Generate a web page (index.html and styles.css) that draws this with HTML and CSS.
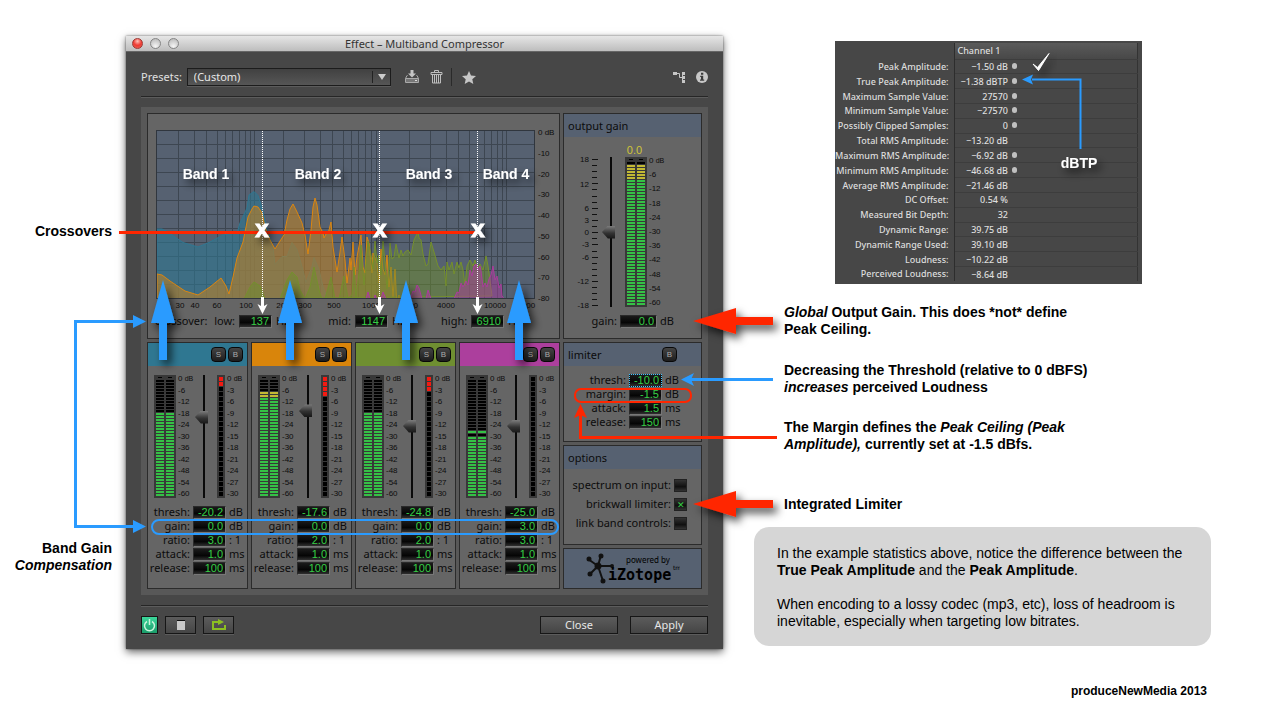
FILE: index.html
```html
<!DOCTYPE html>
<html lang="en">
<head>
<meta charset="utf-8">
<title>Effect – Multiband Compressor</title>
<link rel="stylesheet" href="styles.css">
</head>
<body>
<main class="slide">
  <aside class="callouts">
    <p class="callout crossovers">Crossovers</p>
    <p class="callout band-gain">Band Gain<br><em>Compensation</em></p>
  </aside>

  <section class="window">
    <header class="titlebar">
      <span class="light red"></span><span class="light"></span><span class="light"></span>
      <h1>Effect – Multiband Compressor</h1>
    </header>
    <div class="toolbar">
      <label for="preset">Presets:</label>
      <span class="select"><select id="preset"><option>(Custom)</option></select></span>
      <button class="icon save" aria-label="Save preset"><svg width="16" height="14" viewBox="0 0 16 14"><path d="M6.500 0h3v3.500h2.500L8 7.500 4 3.500h2.500z" fill="#c4c4c4"/><path d="M3.500 5.500H3L1.500 8.500v4h13v-4L13 5.500h-.500M1.500 8.500h13" fill="none" stroke="#aaa"/><path d="M2 9h12v3H2z" fill="#777"/><path d="M11 10.500h2" stroke="#ddd"/></svg></button>
      <button class="icon" aria-label="Delete preset"><svg width="13" height="14" viewBox="0 0 13 14" fill="none" stroke="#bdbdbd"><path d="M1 4.500V2.500h11v2M4.500 2V.500h4V2M2.500 5v8h8V5M4.500 5v8M6.500 5v8M8.500 5v8M1 4.500h11"/></svg></button>
      <i class="divider"></i>
      <button class="icon" aria-label="Favorite"><svg width="14" height="13" viewBox="0 0 14 13"><path d="M7 0l2 4.400 5 .500-3.700 3.300L11.300 13 7 10.500 2.700 13l1-4.800L0 4.900l5-.500z" fill="#c6c6c6"/></svg></button>
      <span class="spring"></span>
      <button class="icon" aria-label="Routing"><svg width="13" height="13" viewBox="0 0 13 13"><path d="M0 1h4v3H0zM9 1h3v3H9zM9 5h3v3H9zM9 9h3v3H9z" fill="#c6c6c6"/><path d="M4 2.500h2.500v4H9M9.500 9v-5" fill="none" stroke="#c6c6c6"/></svg></button>
      <button class="icon" aria-label="Information"><svg width="12" height="12" viewBox="0 0 12 12"><circle cx="6" cy="6" r="6" fill="#c8c8c8"/><path d="M5 1.800h2.300v1.900H5zM4.200 4.800h3v3.800h1v1.200H4V8.600h1V6h-.800z" fill="#3c3c3c"/></svg></button>
    </div>

    <div class="rack">
      <section class="panel graph">
        <div class="plot">
          <svg class="spectrum" viewBox="157 131 377 167" preserveAspectRatio="none">
            <path class="gridlines" d="M157 144.500h377M157 158.500h377M157 172.500h377M157 186.500h377M157 200.500h377M157 214.500h377M157 228.500h377M157 242.500h377M157 256.500h377M157 270.500h377M157 284.500h377M178.500 131v167M194.500 131v167M206.500 131v167M217.500 131v167M225.500 131v167M232.500 131v167M239.500 131v167M245.500 131v167M250.500 131v167M254.500 131v167M283.500 131v167M304.500 131v167M320.500 131v167M332.500 131v167M343.500 131v167M351.500 131v167M358.500 131v167M365.500 131v167M371.500 131v167M376.500 131v167M409.500 131v167M430.500 131v167M446.500 131v167M458.500 131v167M469.500 131v167M484.500 131v167M491.500 131v167M497.500 131v167M502.500 131v167M506.500 131v167"/>
            <path class="wave teal" d="M157 299V229l5 0 5 2.500 16 11 15 4.500 12-5 13-7 14-2 3-10 7-15 2-13 5-3.500 4 4 4 12 5 22 6 18 2 17 7-8 5 0 5-14 5 7 5 17 4 16 6-16 2-9 5 12 4 17 4 11z"/>
            <path class="wave orange" d="M157 299V274l5 1 8 6 15 10 13 4 12-8 11-9 5 8 3 8 4-17 4-19 6-16 5-25 4-8 2-3 4 1 4 6 3 14 5 13 5 9 5-8 4-6 3-15 3-11 3-5 4 8 5 11 3 12 3 19 3-24 2-23 2-9 2 7 3 22 3 6 1 5 3-6 1 2 3-12 2 25 4 25 3-20 2-15 3 23 2 23 3-25 1 12 2-28 2 33 2-18 4-22 2 32 2 6 2-36 2 6 3 30 1-20 4 10 2 20 2-34 2 20 2 6 2-20 2 32 2-20 2 30 2-28 2 38 2-12 2 22 2-24 2 26 2-16 2 24 2-14 2 22 2-12 2 14z"/>
            <path class="wave green" d="M244 299l6-12 4-5 6 4 5 13h15l7-19 5-8 5 5 3 13 5 9 5-12 4-20 5 23 3 9h3l6-22 4 22h4l5-23 4 22 4-3 2-28 2 30 3-24 2-28 3 40 2-22 2-22 3 14 2 14 2-28 2 22 2-8 2 20 2-34 2 22 2 26 2-24 1-22 2 16 2-2 2-13 3 14 2-8 2 6 2-4 3-2 3 5 3-15 4-8 1 6 2 2 2 14 3 12 2-2 3-22 3 10 4 14 3 4 3-4 2 20 1-24 2 8 3-8 2 12 3-12 2 6 2-6 2 8 2 16 2-20 3-6 3 6 2-6 2 8 3-4 3 6 3-14 2 10 2 14 2 16z"/>
            <path class="wave magenta" d="M366 299l2-7 2 7h4l1-4 2 4h4l2-7 3 7h24l3-8 2 1 2-7 2 3 3 11h4l2-9 3 9h23l3-7 2 1 2-10 2 4 3-6 2 4 2-15 2 6 2-10 2-2 2 6 2-4 1 5 2 16 2-4 2 4 2-8 2-4 2-9 2 14 2-4 2 12 2-4 1 12 3 4 2 8z"/>
          </svg>
          <ul class="scale plot-db"><li>0 dB</li><li>-10</li><li>-20</li><li>-30</li><li>-40</li><li>-50</li><li>-60</li><li>-70</li><li>-80</li></ul>
        </div>
        <svg class="freq" viewBox="148 299 411 12">
          <text x="180" y="307">30</text><text x="195" y="307">40</text><text x="217" y="307">60</text><text x="246" y="307">100</text><text x="283" y="307">200</text><text x="305" y="307">300</text><text x="334" y="307">500</text><text x="371" y="307">1000</text><text x="409" y="307">2000</text><text x="446" y="307">4000</text><text x="495" y="307">10000</text><text x="524" y="307">20000</text>
        </svg>
        <div class="xover">
          <span class="xover-title">crossover:</span>
          <span class="field"><label for="x1">low:</label><input id="x1" value="137"><span>Hz</span></span>
          <span class="field"><label for="x2">mid:</label><input id="x2" value="1147"><span>Hz</span></span>
          <span class="field"><label for="x3">high:</label><input id="x3" value="6910"><span>Hz</span></span>
        </div>
      </section>

      <section class="panel output">
        <h2 class="head">output gain</h2>
        <output class="peak">0.0</output>
        <div class="out-meters">
          <svg class="ticks" viewBox="0 0 34 156"><path d="M28 5.500h6M28 11.500h5M28 17.500h5M28 23.500h5M28 29.500h6M28 35.500h5M28 42.500h5M28 48.500h5M28 54.500h6M28 60.500h5M28 66.500h6M28 72.500h5M28 78.500h6M28 84.500h5M28 90.500h6M28 97.500h5M28 103.500h6M28 109.500h5M28 115.500h5M28 121.500h5M28 127.500h6M28 133.500h5M28 139.500h5M28 145.500h5M28 151.500h6"/><text x="25" y="8">18</text><text x="25" y="33">12</text><text x="25" y="57">6</text><text x="25" y="69">3</text><text x="25" y="81">0</text><text x="25" y="93">-3</text><text x="25" y="106">-6</text><text x="25" y="130">-12</text><text x="25" y="154">-18</text></svg>
          <input class="fader" type="range" min="0" max="1000" value="500" aria-label="Output gain">
          <div class="meter"><i style="--off:1;--hot:5"></i><i style="--off:1;--hot:5"></i></div>
          <ul class="scale"><li>0 <small>dB</small></li><li>-6</li><li>-12</li><li>-18</li><li>-24</li><li>-30</li><li>-36</li><li>-42</li><li>-48</li><li>-54</li><li>-60</li></ul>
        </div>
        <div class="field gain"><label for="og">gain:</label><input id="og" value="0.0"><span>dB</span></div>
      </section>

      <div class="bands">
        <section class="panel band">
          <div class="head teal"><button class="key">S</button><button class="key">B</button></div>
          <div class="meters">
            <div class="meter"><i style="--off:11;--hot:0"></i><i style="--off:11;--hot:0"></i></div>
            <ul class="scale"><li>0 <small>dB</small></li><li>-6</li><li>-12</li><li>-18</li><li>-24</li><li>-30</li><li>-36</li><li>-42</li><li>-48</li><li>-54</li><li>-60</li></ul>
            <input class="fader" type="range" min="0" max="1000" value="677" aria-label="Band 1 threshold">
            <div class="reduction"><i style="--cut:2"></i></div>
            <ul class="scale"><li>0 <small>dB</small></li><li>-3</li><li>-6</li><li>-9</li><li>-12</li><li>-15</li><li>-18</li><li>-21</li><li>-24</li><li>-27</li><li>-30</li></ul>
          </div>
          <div class="params">
            <div class="field"><label for="b1t">thresh:</label><input id="b1t" value="-20.2"><span>dB</span></div>
            <div class="field"><label for="b1g">gain:</label><input id="b1g" value="0.0"><span>dB</span></div>
            <div class="field"><label for="b1r">ratio:</label><input id="b1r" value="3.0"><span>: 1</span></div>
            <div class="field"><label for="b1a">attack:</label><input id="b1a" value="1.0"><span>ms</span></div>
            <div class="field"><label for="b1e">release:</label><input id="b1e" value="100"><span>ms</span></div>
          </div>
        </section>
        <section class="panel band">
          <div class="head orange"><button class="key">S</button><button class="key">B</button></div>
          <div class="meters">
            <div class="meter"><i style="--off:4;--hot:2"></i><i style="--off:4;--hot:2"></i></div>
            <ul class="scale"><li>0 <small>dB</small></li><li>-6</li><li>-12</li><li>-18</li><li>-24</li><li>-30</li><li>-36</li><li>-42</li><li>-48</li><li>-54</li><li>-60</li></ul>
            <input class="fader" type="range" min="0" max="1000" value="732" aria-label="Band 2 threshold">
            <div class="reduction"><i style="--cut:4"></i></div>
            <ul class="scale"><li>0 <small>dB</small></li><li>-3</li><li>-6</li><li>-9</li><li>-12</li><li>-15</li><li>-18</li><li>-21</li><li>-24</li><li>-27</li><li>-30</li></ul>
          </div>
          <div class="params">
            <div class="field"><label for="b2t">thresh:</label><input id="b2t" value="-17.6"><span>dB</span></div>
            <div class="field"><label for="b2g">gain:</label><input id="b2g" value="0.0"><span>dB</span></div>
            <div class="field"><label for="b2r">ratio:</label><input id="b2r" value="2.0"><span>: 1</span></div>
            <div class="field"><label for="b2a">attack:</label><input id="b2a" value="1.0"><span>ms</span></div>
            <div class="field"><label for="b2e">release:</label><input id="b2e" value="100"><span>ms</span></div>
          </div>
        </section>
        <section class="panel band">
          <div class="head green"><button class="key">S</button><button class="key">B</button></div>
          <div class="meters">
            <div class="meter"><i style="--off:11;--hot:0"></i><i style="--off:11;--hot:0"></i></div>
            <ul class="scale"><li>0 <small>dB</small></li><li>-6</li><li>-12</li><li>-18</li><li>-24</li><li>-30</li><li>-36</li><li>-42</li><li>-48</li><li>-54</li><li>-60</li></ul>
            <input class="fader" type="range" min="0" max="1000" value="595" aria-label="Band 3 threshold">
            <div class="reduction"><i style="--cut:3"></i></div>
            <ul class="scale"><li>0 <small>dB</small></li><li>-3</li><li>-6</li><li>-9</li><li>-12</li><li>-15</li><li>-18</li><li>-21</li><li>-24</li><li>-27</li><li>-30</li></ul>
          </div>
          <div class="params">
            <div class="field"><label for="b3t">thresh:</label><input id="b3t" value="-24.8"><span>dB</span></div>
            <div class="field"><label for="b3g">gain:</label><input id="b3g" value="0.0"><span>dB</span></div>
            <div class="field"><label for="b3r">ratio:</label><input id="b3r" value="2.0"><span>: 1</span></div>
            <div class="field"><label for="b3a">attack:</label><input id="b3a" value="1.0"><span>ms</span></div>
            <div class="field"><label for="b3e">release:</label><input id="b3e" value="100"><span>ms</span></div>
          </div>
        </section>
        <section class="panel band">
          <div class="head magenta"><button class="key">S</button><button class="key">B</button></div>
          <div class="meters">
            <div class="meter held"><i style="--off:17;--hot:0"></i><i style="--off:17;--hot:0"></i></div>
            <ul class="scale"><li>0 <small>dB</small></li><li>-6</li><li>-12</li><li>-18</li><li>-24</li><li>-30</li><li>-36</li><li>-42</li><li>-48</li><li>-54</li><li>-60</li></ul>
            <input class="fader" type="range" min="0" max="1000" value="595" aria-label="Band 4 threshold">
            <div class="reduction"><i style="--cut:0"></i></div>
            <ul class="scale"><li>0 <small>dB</small></li><li>-3</li><li>-6</li><li>-9</li><li>-12</li><li>-15</li><li>-18</li><li>-21</li><li>-24</li><li>-27</li><li>-30</li></ul>
          </div>
          <div class="params">
            <div class="field"><label for="b4t">thresh:</label><input id="b4t" value="-25.0"><span>dB</span></div>
            <div class="field"><label for="b4g">gain:</label><input id="b4g" value="3.0"><span>dB</span></div>
            <div class="field"><label for="b4r">ratio:</label><input id="b4r" value="3.0"><span>: 1</span></div>
            <div class="field"><label for="b4a">attack:</label><input id="b4a" value="1.0"><span>ms</span></div>
            <div class="field"><label for="b4e">release:</label><input id="b4e" value="100"><span>ms</span></div>
          </div>
        </section>
      </div>

      <div class="side">
        <section class="panel limiter">
          <h2 class="head">limiter <button class="key">B</button></h2>
          <div class="params">
            <div class="field"><label for="lt">thresh:</label><input id="lt" class="active" value="-10.0"><span>dB</span></div>
            <div class="field"><label for="lm">margin:</label><input id="lm" value="-1.5"><span>dB</span></div>
            <div class="field"><label for="la">attack:</label><input id="la" value="1.5"><span>ms</span></div>
            <div class="field"><label for="lr">release:</label><input id="lr" value="150"><span>ms</span></div>
          </div>
        </section>
        <section class="panel options">
          <h2 class="head">options</h2>
          <div class="checks">
            <label>spectrum on input: <input type="checkbox"></label>
            <label>brickwall limiter: <input type="checkbox" checked></label>
            <label>link band controls: <input type="checkbox"></label>
          </div>
        </section>
        <section class="panel brand">
          <svg width="94" height="32" viewBox="0 0 94 32">
            <g stroke="#111" stroke-width="2" fill="#111"><path d="M12 13L2 6M12 13l3-11M12 13l14 0M12 13L4 21M12 13l5 15"/><circle cx="12" cy="13" r="2.500"/><circle cx="3" cy="6" r="1.500"/><circle cx="15" cy="3" r="1.500"/><circle cx="26" cy="13" r="1"/><circle cx="4" cy="21" r="1.500"/><circle cx="17" cy="28" r="1.500"/></g>
            <text class="powered" x="40" y="10">powered by</text>
            <text class="izotope" x="22" y="27">iZotope</text>
            <text class="tm" x="87" y="17">tm</text>
          </svg>
        </section>
      </div>
    </div>

    <footer class="actions">
      <button class="power" aria-label="Power"><svg width="13" height="13" viewBox="0 0 13 13" fill="none" stroke="#c8f5dc" stroke-width="1.500"><path d="M4 2.500a5 5 0 1 0 5 0M6.500 0v6"/></svg></button>
      <button class="small" aria-label="Stop"><svg width="8" height="10" viewBox="0 0 8 10"><path d="M0 1h8v9H0z" fill="#c9c9c9"/><path d="M0 0h8v1H0z" fill="#111"/></svg></button>
      <button class="small loop" aria-label="Loop"><svg width="16" height="12" viewBox="0 0 16 12"><path d="M7 3H2v7h12V6" fill="none" stroke="#8cc021" stroke-width="2"/><path d="M7 0l6 3-6 3z" fill="#8cc021"/></svg></button>
      <span class="spring"></span>
      <button class="wide">Close</button>
      <button class="wide">Apply</button>
    </footer>
  </section>

  <div class="notes">
    <section class="stats">
      <table>
        <thead><tr><th></th><th class="channel">Channel 1</th><th class="rest"></th></tr></thead>
        <tbody>
          <tr><th>Peak Amplitude:</th><td>−1.50 dB</td><td class="mark"><i></i></td></tr>
          <tr><th>True Peak Amplitude:</th><td>−1.38 dBTP</td><td class="mark"><i></i></td></tr>
          <tr><th>Maximum Sample Value:</th><td>27570</td><td class="mark"><i></i></td></tr>
          <tr><th>Minimum Sample Value:</th><td>−27570</td><td class="mark"><i></i></td></tr>
          <tr><th>Possibly Clipped Samples:</th><td>0</td><td class="mark"><i></i></td></tr>
          <tr><th>Total RMS Amplitude:</th><td>−13.20 dB</td><td class="mark"></td></tr>
          <tr><th>Maximum RMS Amplitude:</th><td>−6.92 dB</td><td class="mark"><i></i></td></tr>
          <tr><th>Minimum RMS Amplitude:</th><td>−46.68 dB</td><td class="mark"><i></i></td></tr>
          <tr><th>Average RMS Amplitude:</th><td>−21.46 dB</td><td class="mark"></td></tr>
          <tr><th>DC Offset:</th><td>0.54 %</td><td class="mark"></td></tr>
          <tr><th>Measured Bit Depth:</th><td>32</td><td class="mark"></td></tr>
          <tr><th>Dynamic Range:</th><td>39.75 dB</td><td class="mark"></td></tr>
          <tr><th>Dynamic Range Used:</th><td>39.10 dB</td><td class="mark"></td></tr>
          <tr><th>Loudness:</th><td>−10.22 dB</td><td class="mark"></td></tr>
          <tr><th>Perceived Loudness:</th><td>−8.64 dB</td><td class="mark"></td></tr>
        </tbody>
      </table>
    </section>
    <p class="note global"><em>Global</em> Output Gain. This does *not* define<br>Peak Ceiling.</p>
    <p class="note threshold">Decreasing the Threshold (relative to 0 dBFS)<br><em>increases</em> perceived Loudness</p>
    <p class="note margin">The Margin defines the <em>Peak Ceiling (Peak<br>Amplitude),</em> currently set at -1.5 dBfs.</p>
    <p class="note integrated">Integrated Limiter</p>
    <section class="example">
      <p>In the example statistics above, notice the difference between the <b>True Peak Amplitude</b> and the <b>Peak Amplitude</b>.</p>
      <p>When encoding to a lossy codec (mp3, etc), loss of headroom is inevitable, especially when targeting low bitrates.</p>
    </section>
    <p class="credit">produceNewMedia 2013</p>
  </div>

  <svg class="overlay" width="1280" height="720" viewBox="0 0 1280 720">
    <defs>
      <filter id="shade" x="-50%" y="-50%" width="200%" height="200%"><feDropShadow dx="4" dy="5" stdDeviation="4" flood-color="#000" flood-opacity=".7"/></filter>
      <path id="up" d="M0 0L12 43H4V80H-4V43H-12z"/>
      <path id="left" d="M0 0L43 -13V-4H80V4H43V13z"/>
      <path id="down" d="M0 17L-5 7L-1.500 9V0H1.500V9L5 7z"/>
    </defs>
    <g class="dotted"><path d="M262.500 131v167M379.500 131v167M477.500 131v167"/></g>
    <g fill="#fff"><use href="#down" x="262.500" y="297"/><use href="#down" x="379.500" y="297"/><use href="#down" x="477.500" y="297"/></g>
    <path d="M119 232.500H477" stroke="#ff2600" stroke-width="3"/>
    <g class="label" filter="url(#shade)"><text x="206" y="179">Band 1</text><text x="318" y="179">Band 2</text><text x="429" y="179">Band 3</text><text x="506" y="179">Band 4</text><text x="1079" y="168">dBTP</text></g>
    <g class="cross" filter="url(#shade)"><text x="262" y="237">x</text><text x="380" y="237">x</text><text x="478" y="237">x</text></g>
    <path d="M1033 64l4.500 3.500L1049 53.500 1038.500 70.500z" fill="#fff" stroke="#fff" filter="url(#shade)"/>
    <g fill="#2a9bff" filter="url(#shade)"><use href="#up" x="163" y="280"/><use href="#up" x="290" y="280"/><use href="#up" x="406" y="280"/><use href="#up" x="519" y="280"/></g>
    <g fill="#ff2600" filter="url(#shade)"><use href="#left" x="693" y="321"/><use href="#left" x="693" y="504"/></g>
    <g fill="none" stroke="#2a9bff" stroke-width="3">
      <path d="M134 321.500H75.500V526.500H134M690 379.500h83"/>
      <path d="M1080.500 149V79.500H1032" stroke-width="2"/>
      <rect x="152" y="520" width="406" height="14" rx="7" stroke-width="2"/>
    </g>
    <g fill="#2a9bff"><path d="M146 321.500l-13-6.500v13zM146 526.500l-13-6.500v13zM681 379.500l13-6.500-3 6.500 3 6.500zM1022 79.500l11-5-2 5 2 5z"/></g>
    <g fill="none" stroke="#ff2600"><path d="M777 437.500H580.500V415" stroke-width="3"/><rect x="575" y="389" width="116" height="13" rx="6" stroke-width="2"/></g>
    <path d="M580.500 404l6.500 14-6.500-3-6.500 3z" fill="#ff2600"/>
  </svg>
</main>
</body>
</html>
```
FILE: styles.css
```css
* { box-sizing: border-box; }
body { margin: 0; background: #fff; color: #000; font-family: "Liberation Sans", Arial, sans-serif; font-size: 14px; line-height: 17px; }
p, h1, h2, ul { margin: 0; padding: 0; }
ul { list-style: none; }
button, input, select { font: inherit; margin: 0; padding: 0; }
.slide { position: relative; display: grid; grid-template-columns: 126px 597px minmax(0, 1fr); align-items: start; min-height: 720px; }
.overlay { position: absolute; left: 0; top: 0; pointer-events: none; overflow: visible; }
.dotted { stroke: #fff; stroke-width: 1; stroke-dasharray: 1 1; }
.label { fill: #fff; font-weight: bold; text-anchor: middle; }
.cross { fill: #fff; font-size: 24px; font-weight: bold; text-anchor: middle; stroke: #fff; }

.callouts { padding: 223px 14px 0 0; text-align: right; font-weight: bold; }
.band-gain { margin-top: 300px; }

/* Window chrome */
.window { margin-top: 36px; background: #474747; box-shadow: 0 3px 8px rgba(0,0,0,.6), 0 0 2px rgba(0,0,0,.5); font-family: "Noto Sans", sans-serif; font-size: 11px; line-height: 14px; padding-bottom: 15px; }
.titlebar { position: relative; display: flex; align-items: center; gap: 7px; height: 16px; padding-left: 6px; background: linear-gradient(#e6e6e6, #bdbdbd); border-bottom: 1px solid #666; }
.titlebar h1 { flex: 1; padding-right: 60px; text-align: center; font-size: 11px; font-weight: 400; color: #333; }
.light { width: 11px; height: 11px; border: 1px solid #858585; border-radius: 50%; background: radial-gradient(circle at 50% 80%, #f5f5f5, #b4b4b4); }
.light.red { border-color: #9c3a35; background: radial-gradient(circle at 50% 25%, #ffc4bb, #ef3a32 50%, #e8645a); }
.toolbar { display: flex; align-items: center; height: 45px; margin: 0 15px; padding-top: 6px; border-bottom: 1px solid #262626; box-shadow: 0 1px #5c5c5c; color: #e0e0e0; }
.select { position: relative; width: 204px; margin-left: 5px; }
.select select { display: block; width: 100%; height: 18px; padding-left: 6px; border: 1px solid #1c1c1c; border-radius: 0; background: linear-gradient(#414141, #565656); color: #e6e6e6; appearance: none; box-shadow: 0 1px #5c5c5c; }
.select::after { content: ""; position: absolute; right: 5px; top: 6px; border: 4px solid transparent; border-top: 6px solid #ccc; border-bottom: 0; }
.select::before { content: ""; position: absolute; right: 18px; top: 3px; height: 12px; border-left: 1px solid #222; }
.icon { display: flex; padding: 0; margin-left: 10px; border: 0; background: none; }
.icon.save { margin-left: 13px; }
.divider { height: 18px; margin-left: 8px; border-left: 1px solid #2a2a2a; }
.toolbar .divider + .icon { margin-left: 10px; }
.spring { flex: 1; }

/* Rack of panels */
.rack { display: grid; grid-template-columns: 413fr 139fr; grid-template-rows: auto auto; gap: 3px; margin: 10px 15px 0; padding: 6px; background: #585858; }
.panel { background: #656565; border: 1px solid #2b2b2b; color: #0c0c0c; }
.head { display: flex; align-items: center; height: 23px; padding: 0 4px; background: #566171; font-size: 11px; font-weight: 400; }
.graph { padding-top: 16px; }
.plot { display: flex; margin-left: 8px; }
.spectrum { width: 379px; height: 169px; border: 1px solid #30363e; background: #566171; }
.gridlines { stroke: #3d4651; fill: none; }
.wave { stroke-width: 1; }
.wave.teal { stroke: #2f7791; fill: rgba(47,119,145,.6); }
.wave.orange { stroke: #db8610; fill: rgba(184,128,40,.62); }
.wave.green { stroke: #75902c; fill: rgba(110,142,45,.5); }
.wave.magenta { stroke: #ab3c9c; fill: rgba(170,60,155,.5); }
.scale { display: flex; flex-direction: column; justify-content: space-between; font-family: "Liberation Sans", Arial, sans-serif; font-size: 8px; line-height: 8px; white-space: nowrap; }
.scale small { font-size: 7px; }
.plot-db { height: 174px; margin: -1px 0 -5px 3px; }
.freq { display: block; width: 100%; height: 12px; margin-top: 1px; font: 8px "Liberation Sans", Arial, sans-serif; text-anchor: middle; fill: #0c0c0c; }
.xover { display: flex; align-items: center; padding: 2px 0 10px 7px; }
.xover-title { width: 54px; }
.xover .field { display: flex; width: 116px; gap: 4px; }
.xover label { width: 26px; }

.field { display: flex; align-items: center; gap: 3px; height: 14px; }
.field label { flex: 1; text-align: right; white-space: nowrap; }
.xover .field label { flex: none; }
.field span { width: 18px; white-space: nowrap; }
.field input { width: 33px; height: 13px; padding-right: 2px; border: 1px solid #3a3a3a; border-color: #2a2a2a #777 #777 #2a2a2a; border-radius: 0; background: linear-gradient(#1a1a1a, #050505 60%, #303030); color: #35cf45; font-family: "Liberation Sans", Arial, sans-serif; font-size: 11px; line-height: 11px; text-align: right; outline: 0; }
.field input.active { border: 1px dotted #3fc4ff; }

/* Meters and faders */
.meter { display: flex; gap: 2px; width: 22px; padding: 5px 2px 2px; background: radial-gradient(#000, #000) 4px 2px / 4px 1px no-repeat, radial-gradient(#000, #000) 14px 2px / 4px 1px no-repeat, #383838; }
.meter i { flex: 1; background: repeating-linear-gradient(transparent 0 2px, #383838 2px 3px), linear-gradient(#000 0 calc(var(--off) * 3px), #c3b934 0 calc((var(--off) + var(--hot)) * 3px), #35c046 0); }
.meter.held i { background: repeating-linear-gradient(transparent 0 2px, #383838 2px 3px), linear-gradient(#000 0 calc(var(--off) * 3px), #35c046 0 calc((var(--off) + 1) * 3px), #000 0 calc((var(--off) + 2) * 3px), #35c046 0); }
.reduction { width: 8px; padding: 2px 2px 1px; background: #383838; }
.reduction i { display: block; height: 100%; background: repeating-linear-gradient(transparent 0 4px, #383838 4px 5px), linear-gradient(#f31a12 0 calc(var(--cut) * 5px), #000 0); }
.fader { appearance: none; writing-mode: vertical-lr; direction: rtl; width: 13px; height: 100%; background: linear-gradient(90deg, transparent 8px, #0a0a0a 8px 10px, transparent 10px); }
.fader::-webkit-slider-thumb { appearance: none; width: 13px; height: 13px; background: linear-gradient(#7c7c7c, #333 55%, #161616); clip-path: polygon(0 50%, 45% 0, 100% 0, 100% 100%, 45% 100%); }

.peak { display: block; height: 20px; padding: 6px 0 0 4px; text-align: center; color: #cfc438; font-family: "Liberation Sans", Arial, sans-serif; font-size: 11px; }
.out-meters { display: flex; height: 150px; }
.out-meters .ticks { width: 34px; height: 156px; margin: -3px 4px 0 0; font: 8px "Liberation Sans", Arial, sans-serif; text-anchor: end; fill: #0c0c0c; }
.ticks path { stroke: #111; }
.out-meters .fader { margin-right: 10px; }
.out-meters .scale { margin-left: 2px; }
.output .gain { height: 14px; margin: 7px 0 0; padding-right: 23px; }
.output .gain input { width: 37px; }

.bands { display: grid; grid-template-columns: repeat(4, 1fr); gap: 3px; }
.head.teal { background: #2f7791; }
.head.orange { background: #d9850b; }
.head.green { background: #6f8f31; }
.head.magenta { background: #ac3f9d; }
.band .head { justify-content: flex-end; gap: 2px; }
.key { width: 15px; height: 15px; border: 1px solid #080808; border-radius: 4px; background: linear-gradient(#444, #1d1d1d); color: #aaa; font-family: "Liberation Sans", Arial, sans-serif; font-size: 8px; line-height: 12px; }
.meters { display: grid; grid-template-columns: 22px 19px 13px 17px 1fr; height: 123px; margin: 9px 0 7px 6px; }
.meters .scale { margin-left: 2px; }
.meters .reduction { margin-left: 9px; }
.band .params { padding-bottom: 13px; }

.side { display: grid; grid-template-rows: 100fr 100fr 41fr; gap: 3px; }
.limiter .head .key { margin: 0 0 0 auto; }
.limiter .head { padding-right: 24px; }
.limiter .params { padding: 7px 18px 0 0; }
.checks { display: flex; flex-direction: column; align-items: flex-end; gap: 5px; padding: 9px 14px 0 0; }
.checks label { display: flex; align-items: center; gap: 3px; white-space: nowrap; }
.checks input { appearance: none; width: 13px; height: 13px; border: 1px solid #222; background: linear-gradient(#333, #101010 60%, #333); color: #35cf45; font-size: 9px; line-height: 11px; text-align: center; }
.checks input:checked::before { content: "✕"; }
.brand { display: grid; place-items: center; background: #566171; }
.powered { font: 8px "Noto Sans", sans-serif; }
.izotope { font: bold 15px "DejaVu Sans Mono", monospace; }
.tm { font: 6px "DejaVu Sans", sans-serif; }

.actions { display: flex; align-items: center; gap: 7px; margin: 10px 15px 0; padding-top: 10px; border-top: 1px solid #262626; box-shadow: inset 0 1px #5c5c5c; }
.actions button { display: flex; align-items: center; justify-content: center; height: 18px; border: 1px solid #161616; background: linear-gradient(#5c5c5c, #454545); color: #e6e6e6; box-shadow: 0 1px #5c5c5c; }
.actions .power { width: 17px; background: linear-gradient(#3bd69a, #1b9c6a); }
.actions .small { width: 31px; }
.actions .wide { width: 78px; }
.actions .wide + .wide { margin-left: 5px; }

/* Right column */
.notes { padding: 41px 69px 0 31px; }
.stats { width: 307px; margin-left: 81px; padding: 2px 4px 3px 0; background: #474747; font-family: "Noto Sans", sans-serif; font-size: 9px; line-height: 13px; color: #ddd; }
.stats table { width: 100%; height: 238px; border-collapse: collapse; border-right: 1px solid #333; table-layout: fixed; }
.stats th, .stats td { padding: 0; text-align: right; font-weight: 500; white-space: nowrap; }
.stats th:first-child { width: 119px; padding-right: 5px; border-right: 1px solid #2d2d2d; }
.stats thead th { height: 16px; background: linear-gradient(#5a5a5a, #484848); }
.stats thead th:first-child { background: none; }
.stats .channel { width: 54px; padding-left: 3px; text-align: left; overflow: visible; }
.stats tbody td { border-top: 1px solid #3d3d3d; }
.stats .mark { text-align: left; padding-left: 4px; }
.mark i { display: inline-block; width: 5px; height: 6px; border-radius: 3px; background: #c0c0c0; vertical-align: 1px; }
.note { padding-left: 30px; font-weight: bold; }
.global { margin-top: 20px; }
.threshold { margin-top: 24px; }
.margin { margin-top: 23px; }
.integrated { margin-top: 43px; }
.example { margin-top: 14px; padding: 18px 23px 16px; border-radius: 15px; background: #d6d6d6; }
.example p + p { margin-top: 17px; }
.credit { margin: 37px 4px 0 0; text-align: right; font-size: 12px; font-weight: bold; }
```
